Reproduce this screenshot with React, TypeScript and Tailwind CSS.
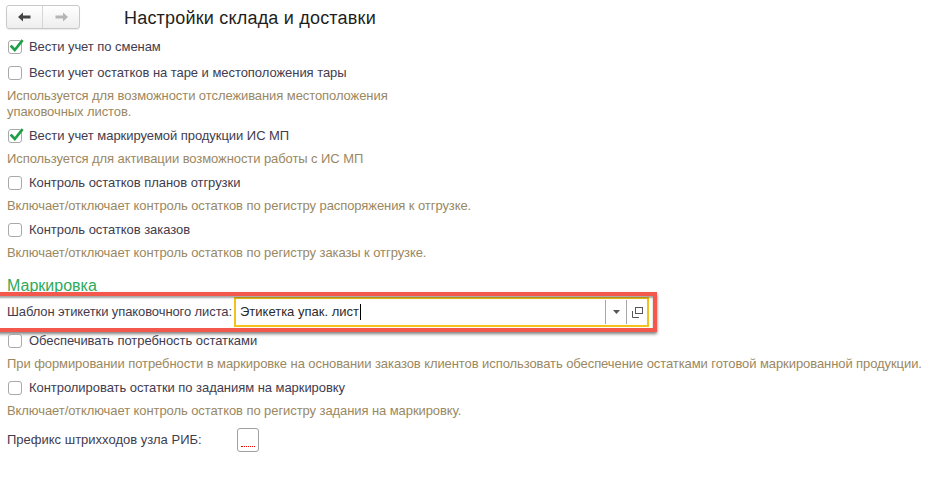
import React from "react";

const font = { fontFamily: '"Liberation Sans", Arial, sans-serif' };

function Check({ checked = false }: { checked?: boolean }) {
    return (
        <span className="relative w-[14px] h-[14px] shrink-0 rounded-[3px] border border-[#a9a9a9] bg-white">
            {checked && (
                <svg className="absolute left-[0px] top-[-2px]" width="15" height="15" viewBox="0 0 15 15">
                    <path d="M2.5 7.5 L5.8 11 L12.8 2.2" fill="none" stroke="#1e9e46" strokeWidth="2.6" strokeLinecap="square" strokeLinejoin="miter" />
                </svg>
            )}
        </span>
    );
}

function CheckRow({ label, checked, className = "" }: { label: string; checked?: boolean; className?: string }) {
    return (
        <div className={`h-[26px] flex items-center gap-[7px] pl-[8px] text-[13px] tracking-[-0.05px] text-[#423c4e] ${className}`}>
            <Check checked={checked} />
            <span>{label}</span>
        </div>
    );
}

function Hint({ children, className = "" }: { children: React.ReactNode; className?: string }) {
    return <div className={`pl-[7px] mt-[2px] text-[13px] tracking-[-0.08px] leading-[16px] text-[#9a8862] whitespace-nowrap ${className}`}>{children}</div>;
}

export default function App() {
    return (
        <div className="w-[944px] h-[486px] bg-white overflow-hidden" style={font}>
            <div className="h-[34px] flex items-start">
                <div className="ml-[6px] mt-[5px] flex h-[24px] w-[74px] rounded-[3px] border border-[#c9c9c9] bg-gradient-to-b from-white to-[#eeeeee] shadow-[0_1px_1px_rgba(0,0,0,0.08)]">
                    <div className="w-1/2 flex items-center justify-center border-r border-[#d6d6d6]">
                        <svg width="13" height="10" viewBox="0 0 13 10">
                            <path d="M0 5 L5 0.5 L5 3.6 L12.5 3.6 L12.5 6.4 L5 6.4 L5 9.5 Z" fill="#444" />
                        </svg>
                    </div>
                    <div className="w-1/2 flex items-center justify-center">
                        <svg width="13" height="10" viewBox="0 0 13 10">
                            <path d="M13 5 L8 0.5 L8 3.6 L0.5 3.6 L0.5 6.4 L8 6.4 L8 9.5 Z" fill="#b5b5b5" />
                        </svg>
                    </div>
                </div>
                <div className="ml-[44px] mt-[6px] text-[18px] leading-[24px] tracking-[0.2px] text-[#1e1e1e]">Настройки склада и доставки</div>
            </div>

            <CheckRow label="Вести учет по сменам" checked />
            <CheckRow label="Вести учет остатков на таре и местоположения тары" />
            <Hint className="mt-[1px]">
                Используется для возможности отслеживания местоположения
                <br />
                упаковочных листов.
            </Hint>
            <CheckRow label="Вести учет маркируемой продукции ИС МП" checked className="mt-[3px]" />
            <Hint>Используется для активации возможности работы с ИС МП</Hint>
            <CheckRow label="Контроль остатков планов отгрузки" className="mt-[3px]" />
            <Hint>Включает/отключает контроль остатков по регистру распоряжения к отгрузке.</Hint>
            <CheckRow label="Контроль остатков заказов" className="mt-[3px]" />
            <Hint>Включает/отключает контроль остатков по регистру заказы к отгрузке.</Hint>

            <div className="mt-[16px] pl-[7px] text-[16px] leading-[18px] text-[#2faa5c]">Маркировка</div>

            <div className="relative mt-[2px] h-[30px] w-[649px] flex items-center">
                <span className="pl-[7px] w-[234px] shrink-0 whitespace-nowrap text-[13px] tracking-[-0.1px] text-[#423c4e]">Шаблон этикетки упаковочного листа:</span>
                <div className="flex-1 h-[30px] flex items-center border-2 border-[#f3c21c] bg-white">
                    <span className="pl-[4px] text-[13px] text-[#2b2b2b]">Этикетка упак. лист</span>
                    <span className="ml-[1px] w-px h-[16px] bg-black" />
                    <div className="ml-auto h-[24px] w-[21px] flex items-center justify-center border-l border-[#a8a8a8]">
                        <svg width="7" height="4" viewBox="0 0 7 4">
                            <path d="M0 0 L7 0 L3.5 4 Z" fill="#555" />
                        </svg>
                    </div>
                    <div className="h-[24px] w-[21px] flex items-center justify-center border-l border-[#a8a8a8]">
                        <svg width="11" height="11" viewBox="0 0 11 11">
                            <rect x="3.5" y="0.5" width="7" height="6" fill="none" stroke="#555" />
                            <path d="M0.5 4 L0.5 10.5 L7 10.5" fill="none" stroke="#555" />
                        </svg>
                    </div>
                </div>
                <div className="pointer-events-none absolute left-[-6px] right-[-8px] top-[-5px] bottom-[-5px] border-[4px] border-[#f4574c] shadow-[inset_0_2px_2px_rgba(0,0,0,0.35),0_2px_3px_rgba(0,0,0,0.5)]" />
            </div>

            <CheckRow label="Обеспечивать потребность остатками" className="mt-[1px]" />
            <Hint>
                При формировании потребности в маркировке на основании заказов клиентов использовать обеспечение остатками готовой маркированной продукции.
            </Hint>
            <CheckRow label="Контролировать остатки по заданиям на маркировку" className="mt-[3px]" />
            <Hint>Включает/отключает контроль остатков по регистру задания на маркировку.</Hint>

            <div className="mt-[9px] h-[24px] flex items-center">
                <span className="pl-[7px] w-[237px] text-[13px] text-[#423c4e]">Префикс штрихходов узла РИБ:</span>
                <div className="relative w-[22px] h-[24px] rounded-[3px] border border-[#a0a0a0] bg-white">
                    <div className="absolute left-[3px] right-[3px] bottom-[4px] border-b border-dotted border-[#ff0000]" />
                </div>
            </div>
        </div>
    );
}
